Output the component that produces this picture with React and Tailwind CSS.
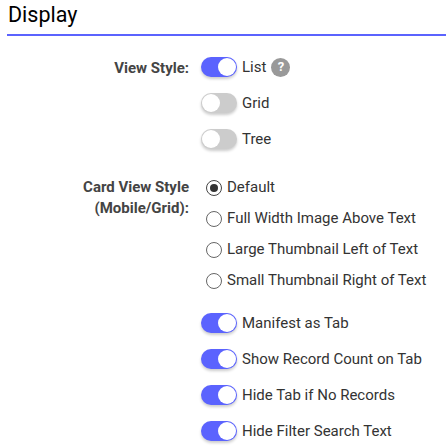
import React from 'react';

const Toggle = ({ on, label, children }) => (
  <div className="flex h-9 items-center">
    <span
      className={`flex h-5 w-9 items-center rounded-full p-[1px] shadow-[0_2px_3px_rgba(0,0,0,0.2)] ${
        on ? 'justify-end bg-[#5b63fe]' : 'justify-start bg-[#cccccc]'
      }`}
    >
      <span className="h-[18px] w-[18px] rounded-full bg-white" />
    </span>
    <span className="ml-[5px] text-[15px] text-[#333]">{label}</span>
    {children}
  </div>
);

const Radio = ({ on, label }) => (
  <div className="flex h-[31px] items-center pl-[5px]">
    <span className={`flex h-4 w-4 items-center justify-center rounded-full border-[1.5px] ${on ? 'border-[#444]' : 'border-[#666]'}`}>
      {on && <span className="h-2 w-2 rounded-full bg-[#333]" />}
    </span>
    <span className="ml-[5px] text-[15px] text-[#333]">{label}</span>
  </div>
);

export default function App() {
  return (
    <div className="h-[448px] w-[446px] overflow-hidden bg-white font-['Roboto',sans-serif]">
      {/* Heading */}
      <div className="ml-[7px] h-[36px] border-b-2 border-[#5b63fe] pl-[1px]">
        <h2 className="text-[21.5px] leading-[30px] text-black">Display</h2>
      </div>

      <div className="mt-[13px] flex">
        <div className="w-[189px] pt-[8px] text-right text-[15px] font-bold text-[#444]">View Style:</div>
        <div className="ml-3">
          <Toggle on label="List">
            <span className="ml-[5px] flex h-[19px] w-[19px] items-center justify-center rounded-full bg-[#999] text-[13px] font-bold text-white">?</span>
          </Toggle>
          <Toggle label="Grid" />
          <Toggle label="Tree" />
        </div>
      </div>

      <div className="mt-[15px] flex">
        <div className="w-[189px] pt-[5px] text-right text-[15px] leading-[21px] font-bold text-[#444]">
          Card View Style
          <br />
          (Mobile/Grid):
        </div>
        <div className="ml-3">
          <Radio on label="Default" />
          <Radio label="Full Width Image Above Text" />
          <Radio label="Large Thumbnail Left of Text" />
          <Radio label="Small Thumbnail Right of Text" />
        </div>
      </div>

      <div className="mt-[9px] ml-[201px]">
        <Toggle on label="Manifest as Tab" />
        <Toggle on label="Show Record Count on Tab" />
        <Toggle on label="Hide Tab if No Records" />
        <Toggle on label="Hide Filter Search Text" />
      </div>
    </div>
  );
}
